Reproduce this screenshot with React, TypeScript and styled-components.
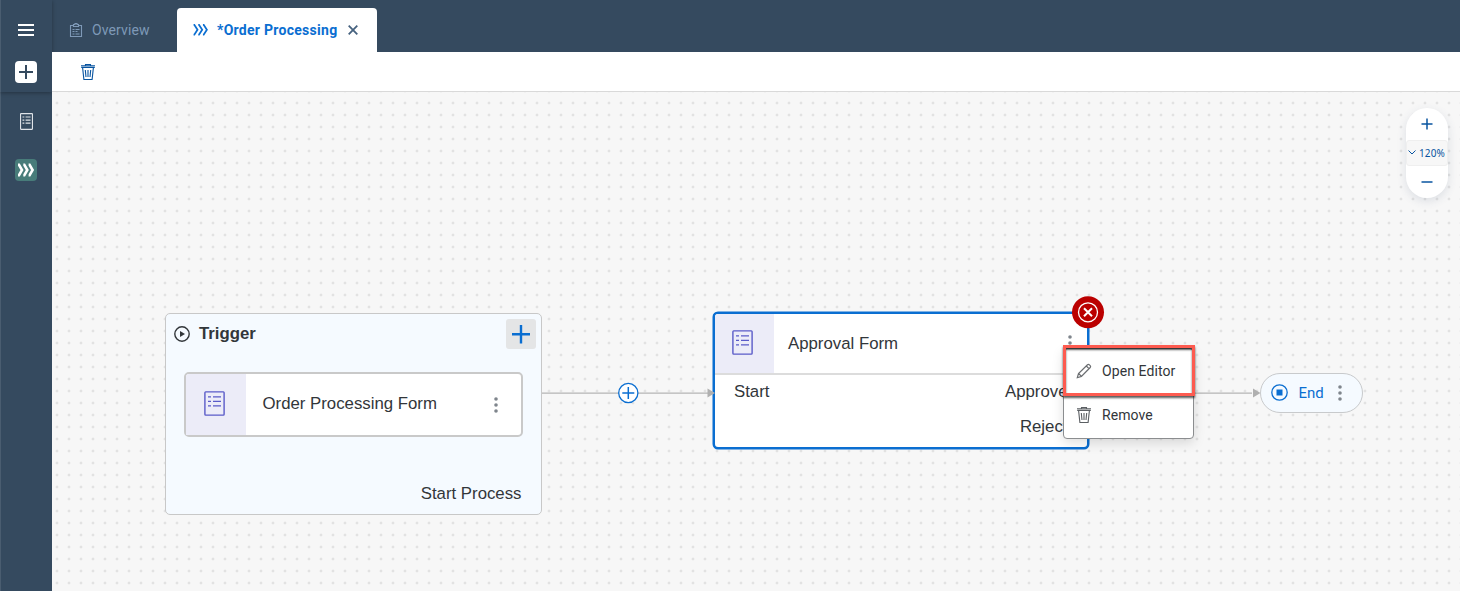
import React from 'react';
import styled, { createGlobalStyle } from 'styled-components';

const Global = createGlobalStyle`
  * { box-sizing: border-box; }
  body { margin: 0; font-family: Roboto, "Open Sans", sans-serif; color: #32363a; overflow: hidden; }
`;

const Shell = styled.div`
  display: flex;
  width: 100%;
  height: 100vh;
  background: #354a5f;
`;

const Sidebar = styled.nav`
  width: 52px;
  flex: none;
  display: flex;
  flex-direction: column;
  background: linear-gradient(90deg, #4a5d70 1px, #354a5f 1px);
`;

const SidebarTop = styled.div`
  height: 92px;
  padding-top: 22px;
  display: flex;
  flex-direction: column;
  align-items: center;
  gap: 23px;
  box-shadow: 0 1px 4px rgba(0, 0, 0, 0.32);
`;

const SidebarItems = styled.div`
  display: flex;
  flex-direction: column;
  align-items: center;
  padding-top: 21px;
  gap: 29px;
`;

const Tile = styled.span<{ $bg: string }>`
  display: flex;
  width: 22px;
  height: 22px;
  border-radius: 4px;
  background: ${(p) => p.$bg};
`;

const Main = styled.div`
  flex: 1;
  min-width: 0;
  display: flex;
  flex-direction: column;
`;

const TabBar = styled.div`
  height: 52px;
  display: flex;
  align-items: flex-end;
`;

const Tab = styled.div<{ $active?: boolean }>`
  height: 44px;
  width: ${(p) => (p.$active ? 200 : 125)}px;
  display: flex;
  align-items: center;
  padding-left: ${(p) => (p.$active ? 16 : 17)}px;
  font-size: 14px;
  line-height: 16px;
  font-weight: ${(p) => (p.$active ? 700 : 400)};
  color: ${(p) => (p.$active ? '#0a6ed1' : '#7e99b7')};
  background: ${(p) => (p.$active ? '#fff' : 'transparent')};
  border-radius: 4px 4px 0 0;
`;

const TabLabel = styled.span<{ $spacing: number; $gap: number }>`
  margin-left: ${(p) => p.$gap}px;
  letter-spacing: ${(p) => p.$spacing}px;
  white-space: nowrap;
`;

const CloseIcon = styled.svg`
  margin-left: 10.5px;
`;

const Toolbar = styled.div`
  height: 40px;
  background: #fff;
  border-bottom: 1px solid #d9d9d9;
  padding: 11px 0 0 28px;
`;

const Canvas = styled.div`
  position: relative;
  flex: 1;
  overflow: hidden;
  background-color: #f7f7f7;
  background-image: radial-gradient(circle at 6px 6px, #e2e2e2 1.2px, rgba(226, 226, 226, 0) 1.7px);
  background-size: 12px 12px;
  background-position: -1px 5px;
  font-family: "Liberation Sans", Arial, sans-serif;
`;

const Edges = styled.svg`
  position: absolute;
  left: 0;
  top: 0;
`;

const TriggerNode = styled.section`
  position: absolute;
  left: 113px;
  top: 221px;
  width: 377px;
  height: 202px;
  display: flex;
  flex-direction: column;
  background: #f5faff;
  border: 1px solid #c8c8c8;
  border-radius: 5px;
`;

const TriggerHeader = styled.div`
  display: flex;
  align-items: center;
  height: 40px;
  padding: 0 5px 1px 8px;
`;

const TriggerTitle = styled.h2`
  flex: 1;
  margin: 0 0 0 9px;
  font-size: 16.8px;
  line-height: 20px;
  font-weight: 700;
`;

const AddButton = styled.button`
  width: 30px;
  height: 30px;
  padding: 0;
  border: 0;
  border-radius: 3px;
  background: #e4e5e6;
  display: flex;
`;

const FormCard = styled.div`
  display: flex;
  align-items: center;
  width: 338.5px;
  height: 65px;
  margin: 18px 0 0 18px;
  padding-right: 22.5px;
  border: 2px solid #c9c9c9;
  border-radius: 5px;
  background: #fff;
`;

const IconPanel = styled.div<{ $w: number }>`
  width: ${(p) => p.$w}px;
  height: 100%;
  flex: none;
  background: #ececf8;
  display: flex;
  align-items: center;
  justify-content: center;
  padding: 0 4px 2px 0;
  border-radius: 3px 0 0 0;
`;

const NodeLabel = styled.span<{ $ml?: number; $lift?: number; $drop?: number }>`
  flex: 1;
  margin-left: ${(p) => p.$ml || 0}px;
  padding-top: ${(p) => p.$drop || 0}px;
  padding-bottom: ${(p) => p.$lift || 0}px;
  font-size: 16.8px;
  line-height: 20px;
  white-space: nowrap;
`;

const PortLabel = styled.span`
  font-size: 16.8px;
  line-height: 20px;
  white-space: nowrap;
`;

const TriggerFooter = styled.div`
  display: flex;
  justify-content: flex-end;
  margin-top: auto;
  padding: 0 19.5px 10px 0;
`;

const ApprovalNode = styled.section`
  position: absolute;
  left: 661px;
  top: 219.5px;
  width: 375.5px;
  height: 137px;
  background: #fff;
  border: 2px solid #0a6ed1;
  box-shadow: 0 0 0 0.5px #0a6ed1;
  border-radius: 5px;
`;

const ApprovalHeader = styled.div`
  display: flex;
  align-items: center;
  height: 61px;
  border-bottom: 2px solid #dcdcdc;
  padding-right: 14.5px;
`;

const Ports = styled.div`
  display: flex;
  justify-content: space-between;
  padding: 7.5px 19px 0 19px;
`;

const OutPorts = styled.div`
  display: flex;
  flex-direction: column;
  align-items: flex-end;
  gap: 15px;
`;

const ErrorBadge = styled.svg`
  position: absolute;
  left: 1020px;
  top: 204px;
`;

const EndNode = styled.div`
  position: absolute;
  left: 1208px;
  top: 281px;
  width: 103px;
  height: 40px;
  display: flex;
  align-items: center;
  padding: 0 20px 1px 9.5px;
  border: 1.5px solid #c8cacc;
  border-radius: 20px;
  background: #f5faff;
  color: #0a6ed1;
  font-family: Roboto, sans-serif;
  font-size: 15px;
`;

const EndLabel = styled.span`
  flex: 1;
  margin-left: 11px;
  padding-top: 1px;
`;

const Menu = styled.div`
  position: absolute;
  left: 1011px;
  top: 256px;
  width: 131px;
  height: 91px;
  background: #fff;
  border: 1px solid #8b8d8f;
  border-radius: 4px;
  box-shadow: 0 4px 12px rgba(0, 0, 0, 0.13);
  font-family: Roboto, "Open Sans", sans-serif;
  font-size: 14px;
`;

const MenuItem = styled.div`
  height: 44px;
  display: flex;
  align-items: center;
  gap: 10px;
  padding-left: 12px;
  letter-spacing: 0.08px;
`;

const Highlight = styled.div`
  position: absolute;
  left: 1011px;
  top: 253px;
  width: 132px;
  height: 51px;
  border: 3px solid #fd5b50;
  box-shadow: 0 2px 2px rgba(0, 0, 0, 0.65), inset 0 2px 2px rgba(0, 0, 0, 0.65);
`;

const Zoom = styled.div`
  position: absolute;
  left: 1354px;
  top: 16px;
  width: 42px;
  height: 90px;
  border-radius: 21px;
  background: #fff;
  box-shadow: 0 3px 10px rgba(60, 80, 110, 0.14);
  display: flex;
  flex-direction: column;
  align-items: center;
`;

const ZoomButton = styled.button`
  flex: 1;
  width: 42px;
  padding: 0;
  border: 0;
  background: transparent;
  display: flex;
  align-items: center;
  justify-content: center;
`;

const ZoomLevel = styled.div`
  width: 42px;
  height: 26px;
  border: 1px solid #efefef;
  border-radius: 3px;
  background: #f7f7f7;
  color: #0854a0;
  font-family: "Noto Sans", sans-serif;
  font-size: 10px;
  line-height: 12px;
  display: flex;
  align-items: center;
  padding: 0 0 1px 1px;
  gap: 3px;
  letter-spacing: 0.1px;
`;

const FormIcon = ({ w, h, color, sw = 1.4 }: { w: number; h: number; color: string; sw?: number }) => (
  <svg width={w} height={h} viewBox="0 0 21 25" preserveAspectRatio="none" fill="none" stroke={color} strokeWidth={sw}>
    <rect x="0.9" y="0.9" width="19.2" height="23.2" rx="0.8" />
    <path d="M4 5.900h3M9 5.900h8M4 10.400h3M9 10.400h8M4 14.900h3M9 14.900h8" />
  </svg>
);

const TrashIcon = ({ color }: { color: string }) => (
  <svg width="16" height="18" viewBox="0 0 16 18" fill="none" stroke={color} strokeWidth="1.1">
    <path d="M1 2.700h14M5.500 2.200V1.500h5v.7M1.200 4.400h13.600M2.600 4.600l1.300 11.900h8.200l1.300-11.900M5.300 7l.7 7M8 7v7M10.700 7l-.7 7" />
  </svg>
);

const Chevrons = ({ w, h, color, sw }: { w: number; h: number; color: string; sw: number }) => (
  <svg width={w} height={h} viewBox="0 0 16 12" fill="none" stroke={color} strokeWidth={sw}>
    <path d="M.6 .8h.8l3.400 5.200-3.400 5.200H.6M5.600 .8h.8l3.400 5.200-3.400 5.200h-.8M10.600 .8h.8l3.400 5.200-3.400 5.200h-.8" />
  </svg>
);

const Kebab = () => (
  <svg width="4" height="16" viewBox="0 0 4 16" fill="#7f858c">
    <circle cx="2" cy="2" r="1.8" />
    <circle cx="2" cy="8" r="1.8" />
    <circle cx="2" cy="14" r="1.8" />
  </svg>
);

export default function App() {
  return (
    <Shell>
      <Global />
      <Sidebar>
        <SidebarTop>
          <svg width="16" height="16" viewBox="0 0 16 16" stroke="#fff" strokeWidth="2">
            <path d="M0 3h16M0 8h16M0 13h16" />
          </svg>
          <Tile $bg="#fff">
            <svg width="22" height="22" viewBox="0 0 22 22" stroke="#354a5f" strokeWidth="2">
              <path d="M11 4v14M4 11h14" />
            </svg>
          </Tile>
        </SidebarTop>
        <SidebarItems>
          <FormIcon w={13} h={17} color="#dfe3e8" sw={1.8} />
          <Tile $bg="#487c7a">
            <svg width="22" height="22" viewBox="0 0 22 22" fill="none" stroke="#fff" strokeWidth="2.6">
              <path d="M3 5.800h1l3 5.200-3 5.200H3M8.300 5.800h1l3 5.200-3 5.200h-1M13.600 5.800h1l3 5.200-3 5.200h-1" />
            </svg>
          </Tile>
        </SidebarItems>
      </Sidebar>
      <Main>
        <TabBar>
          <Tab>
            <svg width="14" height="16" viewBox="0 0 14 16" fill="none" stroke="#7e99b7" strokeWidth="1.1">
              <path d="M4.500 3.500h-3v11h11v-11h-3M4.500 4.500v-2h1.500v-1h2v1h1.500v2zM3.500 7.500h2M6.500 7.500h4M3.500 9.500h2M6.500 9.500h2M3.500 12h2M6.500 12h4" />
            </svg>
            <TabLabel $spacing={0.1} $gap={9}>Overview</TabLabel>
          </Tab>
          <Tab $active>
            <Chevrons w={15} h={11.5} color="#0a6ed1" sw={1.9} />
            <TabLabel $spacing={0.28} $gap={9}>*Order Processing</TabLabel>
            <CloseIcon width="10" height="10" viewBox="0 0 10 10" stroke="#46627f" strokeWidth="1.8">
              <path d="M.7 .7l8.600 8.600M9.300 .7L.7 9.300" />
            </CloseIcon>
          </Tab>
        </TabBar>
        <Toolbar>
          <TrashIcon color="#0854a0" />
        </Toolbar>
        <Canvas>
          <Edges width="1408" height="499" viewBox="0 0 1408 499">
            <path d="M490 301.200H661M1142 301.200h58" stroke="#b5b5b5" strokeWidth="1.3" />
            <path d="M1201 296.500v9l7.500-4.500z" fill="#b0b0b0" />
            <circle cx="576.300" cy="301" r="9.600" fill="#fff" stroke="#0a6ed1" strokeWidth="1.300" />
            <path d="M570.300 301h12M576.300 295v12" stroke="#0a6ed1" strokeWidth="1.500" />
          </Edges>

          <TriggerNode>
            <TriggerHeader>
              <svg width="16" height="16" viewBox="0 0 16 16">
                <circle cx="8" cy="8" r="7.200" fill="none" stroke="#32363a" strokeWidth="1.400" />
                <path d="M6 4.900v6.200L11 8z" fill="#32363a" />
              </svg>
              <TriggerTitle>Trigger</TriggerTitle>
              <AddButton>
                <svg width="30" height="30" viewBox="0 0 30 30" stroke="#0a6ed1" strokeWidth="2.400">
                  <path d="M15 6v18.500M6 15.300h18" />
                </svg>
              </AddButton>
            </TriggerHeader>
            <FormCard>
              <IconPanel $w={60}>
                <FormIcon w={21} h={25} color="#5a5bc8" />
              </IconPanel>
              <NodeLabel $ml={16.5} $lift={2}>Order Processing Form</NodeLabel>
              <Kebab />
            </FormCard>
            <TriggerFooter>
              <PortLabel>Start Process</PortLabel>
            </TriggerFooter>
          </TriggerNode>

          <ApprovalNode>
            <ApprovalHeader>
              <IconPanel $w={58.5}>
                <FormIcon w={21} h={25} color="#5a5bc8" />
              </IconPanel>
              <NodeLabel $ml={14.5} $drop={2}>Approval Form</NodeLabel>
              <Kebab />
            </ApprovalHeader>
            <Ports>
              <PortLabel>Start</PortLabel>
              <OutPorts>
                <PortLabel>Approve</PortLabel>
                <PortLabel>Reject</PortLabel>
              </OutPorts>
            </Ports>
          </ApprovalNode>

          <Edges width="1408" height="499" viewBox="0 0 1408 499">
            <path d="M655.500 296.500v9l7.500-4.500z" fill="#b0b0b0" />
          </Edges>

          <ErrorBadge width="33" height="33" viewBox="0 0 33 33">
            <circle cx="16" cy="16.300" r="16" fill="#bb0000" />
            <circle cx="16" cy="16.300" r="9.500" fill="none" stroke="#fff" strokeWidth="1.300" />
            <path d="M12 12.300l8 8M20 12.300l-8 8" stroke="#fff" strokeWidth="2" />
          </ErrorBadge>

          <EndNode>
            <svg width="17" height="17" viewBox="0 0 17 17">
              <circle cx="8.500" cy="8.500" r="7.700" fill="none" stroke="#0a6ed1" strokeWidth="1.300" />
              <rect x="5.500" y="5.500" width="6" height="6" fill="#0a6ed1" />
            </svg>
            <EndLabel>End</EndLabel>
            <Kebab />
          </EndNode>

          <Menu>
            <MenuItem>
              <svg width="16" height="16" viewBox="0 0 16 16" fill="none" stroke="#6a6d70" strokeWidth="1.200">
                <path d="M1.300 14.700l1.200-4.200 9-8.700c.7-.6 1.300-.6 1.900 0l.8.8c.6.6.6 1.200 0 1.900l-8.800 8.900zM2.600 10.500l2.900 2.900M10.300 3l2.700 2.700" />
              </svg>
              Open Editor
            </MenuItem>
            <MenuItem>
              <TrashIcon color="#5b5f63" />
              Remove
            </MenuItem>
          </Menu>
          <Highlight />

          <Zoom>
            <ZoomButton>
              <svg width="12" height="12" viewBox="0 0 12 12" stroke="#0854a0" strokeWidth="1.500">
                <path d="M6 .5v11M.5 6h11" />
              </svg>
            </ZoomButton>
            <ZoomLevel>
              <svg width="8" height="5" viewBox="0 0 8 5" fill="none" stroke="#0854a0">
                <path d="M.5 .5L4 4 7.500 .5" />
              </svg>
              120%
            </ZoomLevel>
            <ZoomButton>
              <svg width="12" height="12" viewBox="0 0 12 12" stroke="#0854a0" strokeWidth="1.500">
                <path d="M.5 6h11" />
              </svg>
            </ZoomButton>
          </Zoom>
        </Canvas>
      </Main>
    </Shell>
  );
}
